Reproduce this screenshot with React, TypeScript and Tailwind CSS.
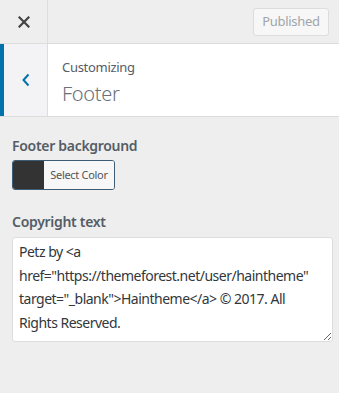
import React from "react";

export default function App() {
  const font = { fontFamily: '"Segoe UI", "Noto Sans", "Open Sans", sans-serif' };
  return (
    <div className="w-[339px] h-[393px] bg-[#eeeeee] text-[#555d66] overflow-hidden tracking-[-0.3px]" style={font}>
      {/* top bar */}
      <div className="flex h-[44px] border-b border-[#dddddd] bg-[#eeeeee]">
        <div className="w-[48px] flex items-center justify-center border-r border-[#dddddd]">
          <svg width="12" height="12" viewBox="0 0 12 12">
            <path d="M1.5 1.5 L10.5 10.5 M10.5 1.5 L1.5 10.5" stroke="#444" strokeWidth="2.2" strokeLinecap="square" />
          </svg>
        </div>
        <div className="flex-1 flex items-center justify-end pr-[10px]">
          <div className="h-[28px] w-[76px] flex items-center justify-center rounded-[3px] border border-[#dddddd] bg-[#f7f7f7] text-[#a0a5aa] text-[13px]">
            Published
          </div>
        </div>
      </div>
      {/* section header */}
      <div className="flex h-[73px] border-b border-[#dddddd] bg-white">
        <div className="w-[48px] flex items-center justify-center bg-[#f3f3f5] border-l-4 border-[#0073aa] border-r border-r-[#dddddd]">
          <svg width="10" height="14" viewBox="0 0 10 14">
            <path d="M7.5 1.5 L2.5 7 L7.5 12.5" stroke="#0073aa" strokeWidth="2" fill="none" />
          </svg>
        </div>
        <div className="flex-1 flex flex-col pl-[14px] pt-[13px]">
          <div className="text-[13px] leading-[20px] text-[#555d66]">Customizing</div>
          <div className="text-[20px] leading-[28px] font-[300] text-[#6b7178] mt-[3px]">Footer</div>
        </div>
      </div>
      {/* content */}
      <div className="px-[12px] pt-[19px]">
        <div className="text-[14px] leading-[20px] font-semibold text-[#555d66]">Footer background</div>
        <div className="mt-[4px] flex w-[103px] h-[30px] rounded-[3px] border border-[#3c5d78] overflow-hidden">
          <div className="w-[31px] bg-[#333333]"></div>
          <div className="flex-1 bg-[#f7f7f7] flex items-center justify-center text-[11px] text-[#555]">
            Select Color
          </div>
        </div>
        <div className="mt-[22px] text-[14px] leading-[20px] font-semibold text-[#555d66]">Copyright text</div>
        <textarea
          readOnly
          defaultValue={'Petz by <a href="https://themeforest.net/user/haintheme" target="_blank">Haintheme</a> © 2017. All Rights Reserved.'}
          className="mt-[5px] block w-[321px] h-[105px] rounded-[3px] border border-[#dddddd] bg-white px-[6px] py-[2px] text-[14px] leading-[23.7px] text-[#32373c] outline-none resize-y tracking-[-0.5px]"
          style={font}
        />
      </div>
    </div>
  );
}
